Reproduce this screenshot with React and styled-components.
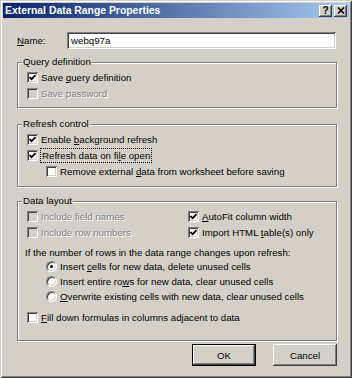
import styled, { createGlobalStyle, css } from 'styled-components';

const GlobalStyle = createGlobalStyle`
  html, body {
    margin: 0;
    padding: 0;
    background: #d4d0c8;
  }
  body {
    font-family: "Liberation Sans", Arial, sans-serif;
    font-size: 9.7px;
    color: #000;
  }
`;

const raised = css`
  box-shadow: inset -1px -1px 0 #404040, inset 1px 1px 0 #fff,
    inset -2px -2px 0 #808080, inset 2px 2px 0 #d4d0c8;
`;

const sunken = css`
  box-shadow: inset 1px 1px 0 #808080, inset -1px -1px 0 #fff,
    inset 2px 2px 0 #404040, inset -2px -2px 0 #d4d0c8;
`;

const Window = styled.div`
  width: 352px;
  height: 378px;
  box-sizing: border-box;
  padding: 3px;
  background: #d4d0c8;
  box-shadow: inset 1px 1px 0 #d4d0c8, inset -1px -1px 0 #404040,
    inset 2px 2px 0 #fff, inset -2px -2px 0 #808080;
  display: flex;
  flex-direction: column;
`;

const TitleBar = styled.div`
  height: 15px;
  flex: none;
  display: flex;
  align-items: center;
  padding: 0 2px 0 2px;
  background: linear-gradient(to right, #0a246a, #a6caf0);
`;

const Title = styled.span`
  flex: 1;
  color: #fff;
  font-weight: bold;
  font-size: 10.4px;
  white-space: nowrap;
`;

const CapButton = styled.span`
  width: 13px;
  height: 12px;
  box-sizing: border-box;
  background: #d4d0c8;
  ${raised};
  display: flex;
  align-items: center;
  justify-content: center;
  font-weight: bold;
  font-size: 10px;
  margin-left: ${p => p.$gap || 0}px;
  padding-bottom: 1px;
`;

const Body = styled.div`
  padding: 14px 11px 0 14px;
  display: flex;
  flex-direction: column;
`;

const NameRow = styled.div`
  display: flex;
  align-items: center;
  height: 17px;
`;

const NameLabel = styled.label`
  width: 50px;
  flex: none;
`;

const NameInput = styled.div`
  flex: 1;
  height: 17px;
  margin-right: 2px;
  box-sizing: border-box;
  background: #fff;
  ${sunken};
  display: flex;
  align-items: center;
  padding-left: 4px;
`;

const Group = styled.div`
  position: relative;
  margin-top: ${p => p.$mt}px;
  margin-right: 1px;
  padding: ${p => p.$pad};
  border: 1px solid #808080;
  box-shadow: inset 1px 1px 0 #fff, 1px 1px 0 #fff;
`;

const Legend = styled.span`
  position: absolute;
  top: -7px;
  left: 4px;
  padding: 0 1px;
  line-height: 12px;
  background: #d4d0c8;
`;

const Row = styled.div`
  display: flex;
  align-items: center;
  gap: 3px;
  height: ${p => p.$h || 16}px;
  margin-top: ${p => p.$mt || 0}px;
  padding-left: ${p => p.$indent || 0}px;
  white-space: nowrap;
  color: ${p => (p.$disabled ? '#808080' : '#000')};
  text-shadow: ${p => (p.$disabled ? '1px 1px 0 #fff' : 'none')};
`;

const Columns = styled.div`
  display: grid;
  grid-template-columns: 161px 1fr;
`;

const Info = styled.div`
  height: 14px;
  margin: 5px 0 0 -2px;
  display: flex;
  align-items: center;
  white-space: nowrap;
`;

const Box = styled.span`
  width: 11px;
  height: 11px;
  flex: none;
  box-sizing: border-box;
  background: ${p => (p.$disabled ? '#d4d0c8' : '#fff')};
  ${sunken};
  display: flex;
  align-items: center;
  justify-content: center;
`;

const Radio = styled.span`
  width: 11px;
  height: 11px;
  flex: none;
  box-sizing: border-box;
  border-radius: 50%;
  background: #fff;
  border: 1px solid;
  border-color: #808080 #fff #fff #808080;
  box-shadow: inset 1px 1px 0 #404040, inset -1px -1px 0 #d4d0c8;
  display: flex;
  align-items: center;
  justify-content: center;
`;

const Dot = styled.span`
  width: 3px;
  height: 3px;
  border-radius: 50%;
  background: #000;
`;

const Focus = styled.span`
  outline: 1px dotted #000;
  outline-offset: 0;
  padding: 1px 1px;
`;

const U = styled.span`
  text-decoration: underline;
`;

const Buttons = styled.div`
  display: flex;
  justify-content: flex-end;
  gap: 17px;
  margin: 3px 1px 0 0;
`;

const Button = styled.div`
  width: 64px;
  height: 22px;
  box-sizing: border-box;
  background: #d4d0c8;
  ${raised};
  display: flex;
  align-items: center;
  justify-content: center;
  ${p => p.$default && css`
    border: 1px solid #000;
  `}
`;

const Check = () => (
  <svg width="7" height="7" viewBox="0 0 7 7">
    <polyline points="0.5,3 2.6,5.2 6.5,1.2" fill="none" stroke="#000" strokeWidth="1.7" />
  </svg>
);

const CheckRow = ({ checked, disabled, indent, focus, mt, children }) => (
  <Row $disabled={disabled} $indent={indent} $mt={mt}>
    <Box $disabled={disabled}>{checked && <Check />}</Box>
    {focus ? <Focus>{children}</Focus> : <span>{children}</span>}
  </Row>
);

const RadioRow = ({ selected, children }) => (
  <Row $h={15} $indent={19}>
    <Radio>{selected && <Dot />}</Radio>
    <span>{children}</span>
  </Row>
);

export default function App() {
  return (
    <>
      <GlobalStyle />
      <Window>
        <TitleBar>
          <Title>External Data Range Properties</Title>
          <CapButton>?</CapButton>
          <CapButton $gap={2}>
            <svg width="8" height="7" viewBox="0 0 8 7">
              <path d="M1 0.5 L7 6.5 M7 0.5 L1 6.5" stroke="#000" strokeWidth="1.6" />
            </svg>
          </CapButton>
        </TitleBar>
        <Body>
          <NameRow>
            <NameLabel><U>N</U>ame:</NameLabel>
            <NameInput>webq97a</NameInput>
          </NameRow>

          <Group $mt={13} $pad="6px 0 6px 9px">
            <Legend>Query definition</Legend>
            <CheckRow checked>Save <U>q</U>uery definition</CheckRow>
            <CheckRow disabled>Save password</CheckRow>
          </Group>

          <Group $mt={16} $pad="6px 0 7px 9px">
            <Legend>Refresh control</Legend>
            <CheckRow checked>Enable <U>b</U>ackground refresh</CheckRow>
            <CheckRow checked focus>Refresh data on fi<U>l</U>e open</CheckRow>
            <CheckRow indent={19}>Remove external <U>d</U>ata from worksheet before saving</CheckRow>
          </Group>

          <Group $mt={14} $pad="6px 0 15px 9px">
            <Legend>Data layout</Legend>
            <Columns>
              <CheckRow disabled>Include field names</CheckRow>
              <CheckRow checked><U>A</U>utoFit column width</CheckRow>
              <CheckRow disabled>Include row numbers</CheckRow>
              <CheckRow checked>Import HTML <U>t</U>able(s) only</CheckRow>
            </Columns>
            <Info>If the number of rows in the data range changes upon refresh:</Info>
            <RadioRow selected>Insert <U>c</U>ells for new data, delete unused cells</RadioRow>
            <RadioRow>Insert entire ro<U>w</U>s for new data, clear unused cells</RadioRow>
            <RadioRow><U>O</U>verwrite existing cells with new data, clear unused cells</RadioRow>
            <CheckRow mt={5}><U>F</U>ill down formulas in columns adjacent to data</CheckRow>
          </Group>

          <Buttons>
            <Button $default>OK</Button>
            <Button>Cancel</Button>
          </Buttons>
        </Body>
      </Window>
    </>
  );
}
